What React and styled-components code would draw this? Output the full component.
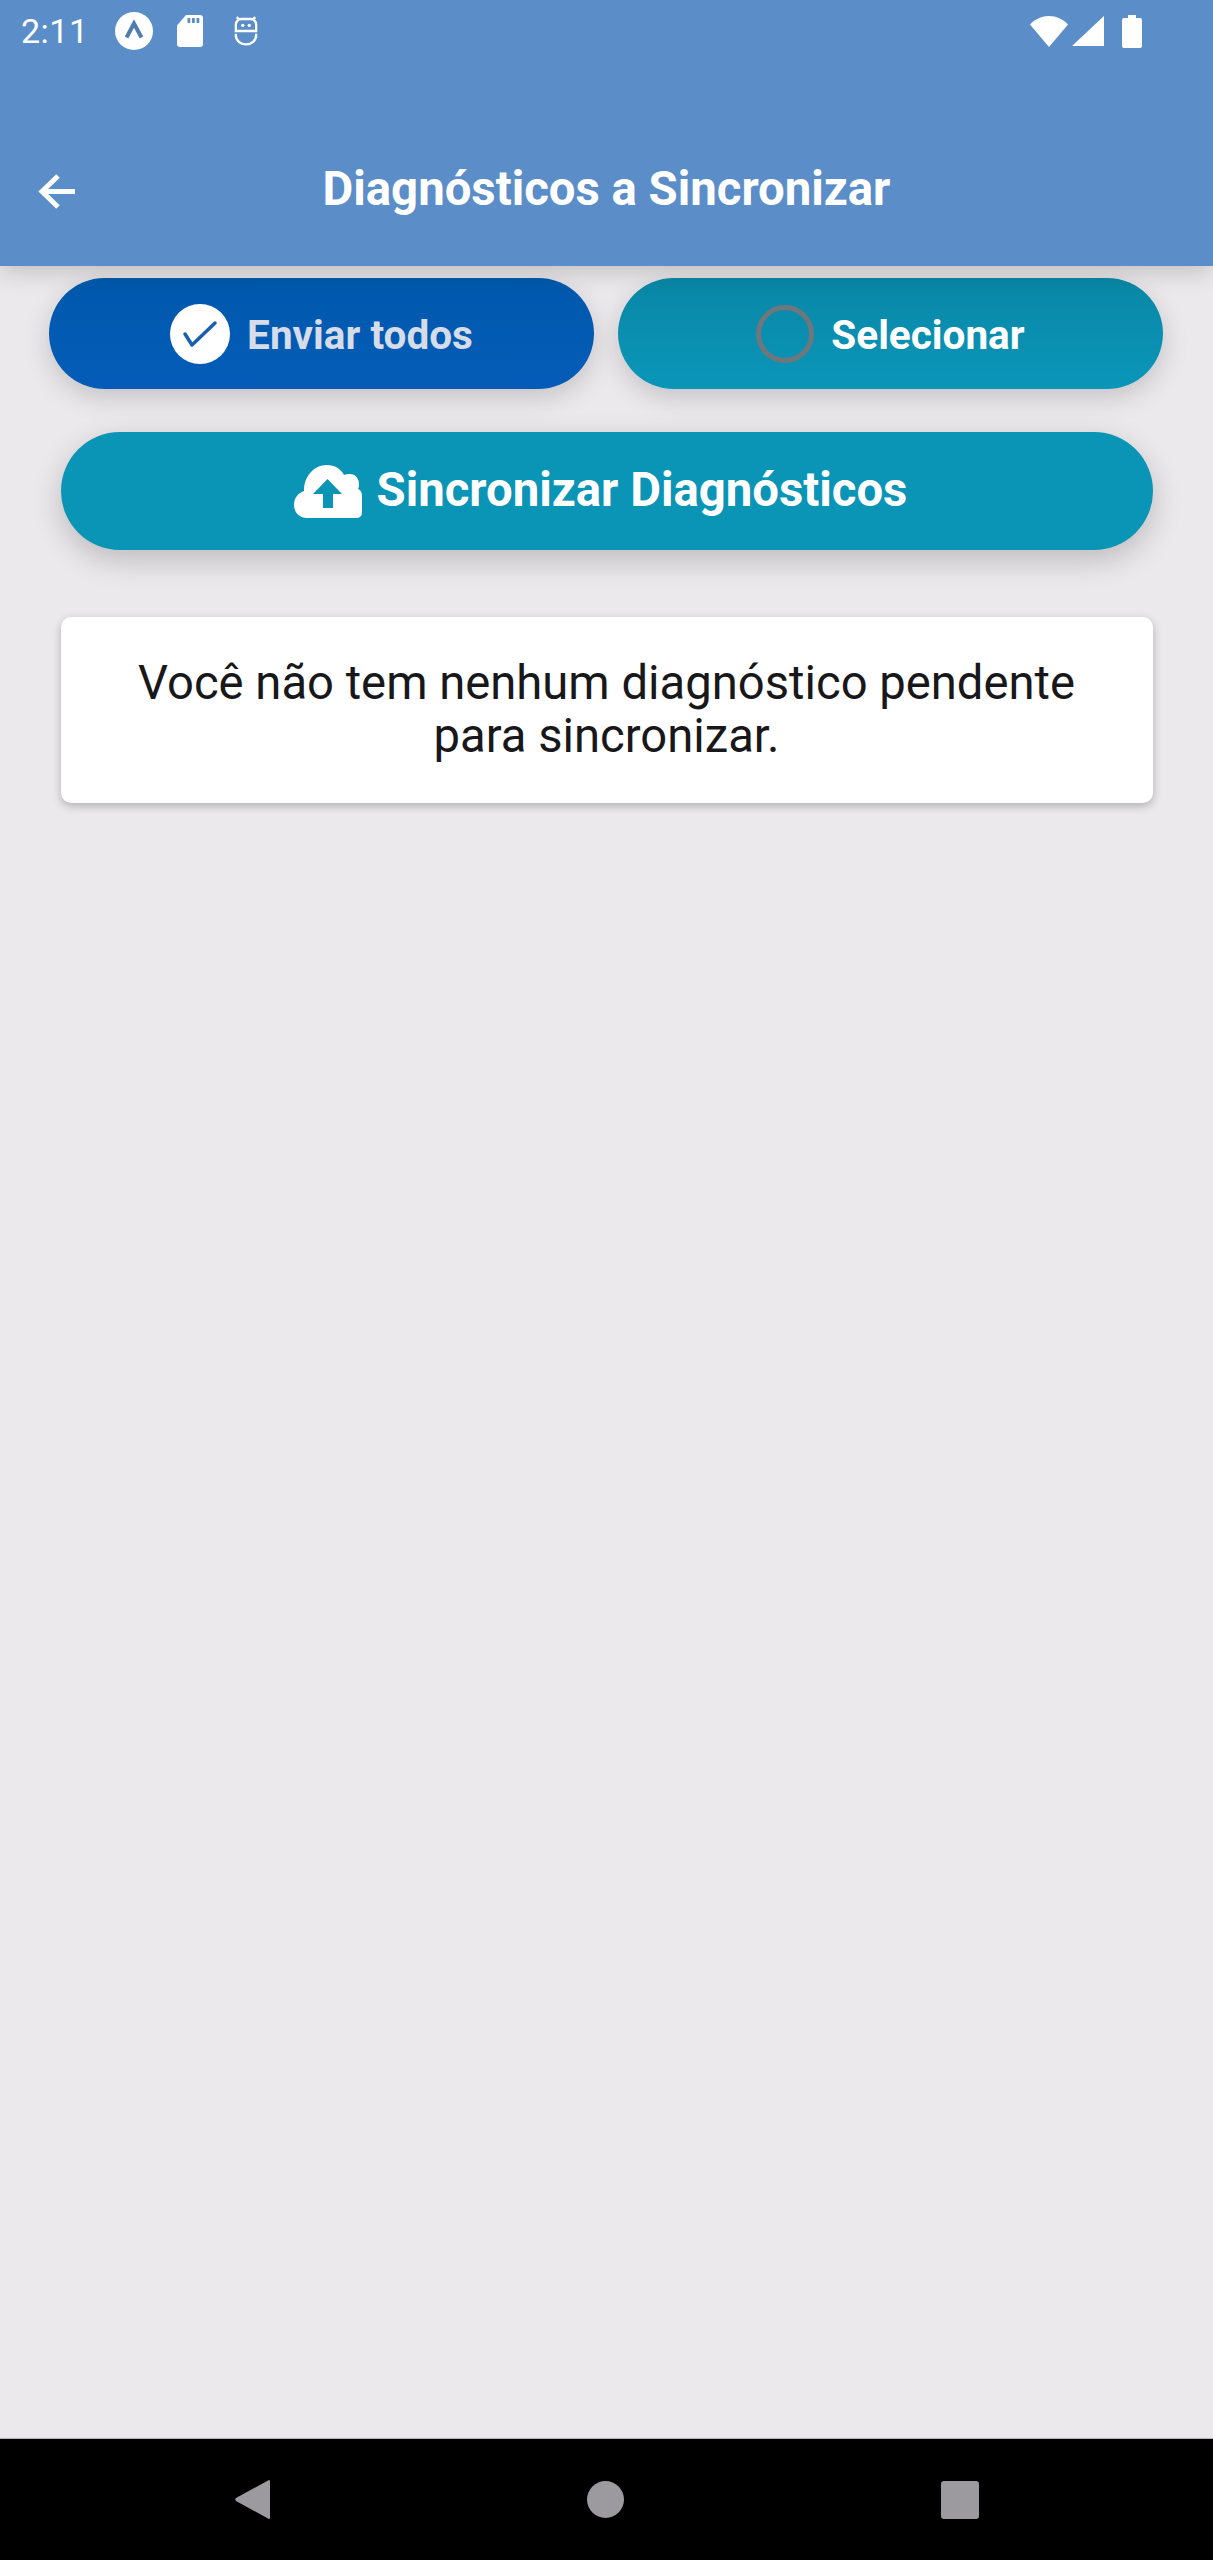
import React from "react";
import styled, { createGlobalStyle } from "styled-components";

const GlobalStyle = createGlobalStyle`
  html, body {
    margin: 0;
    padding: 0;
    background: #ebe9ec;
    font-family: "Roboto", "Liberation Sans", sans-serif;
  }
  button {
    font-family: inherit;
  }
`;

const App = () => {
  return (
    <Screen>
      <GlobalStyle />
      <Header>
        <StatusBar>
          <StatusLeft>
            <Clock>2:11</Clock>
            <ExpoIcon />
            <SdIcon />
            <RobotIcon />
          </StatusLeft>
          <StatusRight>
            <WifiIcon />
            <SignalIcon />
            <BatteryIcon />
          </StatusRight>
        </StatusBar>
        <Toolbar>
          <BackButton>
            <svg width="37" height="35" viewBox="0 0 37 35" fill="none" stroke="#fff" strokeWidth="5">
              <path d="M37 17.5H4" />
              <path d="M20 2L4 17.5 20 33" />
            </svg>
          </BackButton>
          <Title>Diagnósticos a Sincronizar</Title>
        </Toolbar>
      </Header>

      <Content>
        <FilterRow>
          <FilterButton $active>
            <CheckCircle>
              <svg width="60" height="60" viewBox="0 0 60 60" fill="none" stroke="#1a5fae" strokeWidth="3.500" strokeLinecap="round" strokeLinejoin="round">
                <path d="M15 30l7 11L45 19" />
              </svg>
            </CheckCircle>
            <FilterLabel $active>Enviar todos</FilterLabel>
          </FilterButton>
          <FilterButton>
            <EmptyCircle />
            <FilterLabel>Selecionar</FilterLabel>
          </FilterButton>
        </FilterRow>

        <SyncButton>
          <CloudIcon />
          <SyncLabel>Sincronizar Diagnósticos</SyncLabel>
        </SyncButton>

        <EmptyCard>
          Você não tem nenhum diagnóstico pendente
          <br />
          para sincronizar.
        </EmptyCard>
      </Content>

      <NavBar>
        <svg width="35" height="41" viewBox="0 0 35 41">
          <path d="M33 1.5c1 -1 2 -.5 2 1v36c0 1.500 -1 2 -2 1L1 22c-1 -1 -1 -2 0 -3z" fill="#9c9a9e" />
        </svg>
        <svg width="37" height="37" viewBox="0 0 37 37">
          <circle cx="18.500" cy="18.500" r="18.500" fill="#9c9a9e" />
        </svg>
        <svg width="38" height="38" viewBox="0 0 38 38">
          <rect width="38" height="38" rx="3" fill="#9c9a9e" />
        </svg>
      </NavBar>
    </Screen>
  );
};

export default App;

//icons
const CloudIcon = () => (
  <svg width="68" height="53" viewBox="0 0 68 53">
    <path
      fillRule="evenodd"
      fill="#fff"
      d="M13 53C5 53 0 47 0 40C0 33 4 28 10 26C10 11 20 0 33 0C41 0 47 4 50 10C52 9 54 9 56 9C61 9 65 13 65 19C65 21 65 22 64 24C67 25 68 28 68 31V47Q68 53 62 53ZM33.500 14L19 29H29V43H39V29H48Z"
    />
  </svg>
);

const ExpoIcon = () => (
  <svg width="38" height="38" viewBox="0 0 38 38">
    <circle cx="19" cy="19" r="19" fill="#fff" />
    <path d="M11.500 25.500L19 11.500l7.500 14" fill="none" stroke="#4f7db3" strokeWidth="4" />
  </svg>
);

const SdIcon = () => (
  <svg width="26" height="32" viewBox="0 0 26 32">
    <path
      fillRule="evenodd"
      d="M9 0h14a3 3 0 0 1 3 3v26a3 3 0 0 1 -3 3H3a3 3 0 0 1 -3 -3V10.500zM10.500 3v5h2.800V3zM15 3v5h2.800V3zM19.500 3v5h2.800V3z"
      fill="#fff"
    />
  </svg>
);

const RobotIcon = () => (
  <svg width="24" height="32" viewBox="0 0 26 32" fill="none" stroke="#fff" strokeWidth="2.500">
    <path d="M2 16V9a6 6 0 0 1 6 -6h10a6 6 0 0 1 6 6v7z" />
    <path d="M3 1l3 3M23 1l-3 3" />
    <path d="M2 19v2a11 9.500 0 0 0 22 0v-2" />
    <circle cx="9.500" cy="10" r="1.800" fill="#fff" stroke="none" />
    <circle cx="16.500" cy="10" r="1.800" fill="#fff" stroke="none" />
  </svg>
);

const WifiIcon = () => (
  <svg width="38" height="31" viewBox="0 0 38 31">
    <path d="M0 8.500C5 3 12 0 19 0s14 3 19 8.500L19 31z" fill="#fff" />
  </svg>
);

const SignalIcon = () => (
  <svg width="32" height="30" viewBox="0 0 32 30">
    <path d="M32 0v30H0z" fill="#fff" />
  </svg>
);

const BatteryIcon = () => (
  <svg width="20" height="33" viewBox="0 0 20 33">
    <path d="M6 0h8v3h4a2 2 0 0 1 2 2v26a2 2 0 0 1 -2 2H2a2 2 0 0 1 -2 -2V5a2 2 0 0 1 2 -2h4z" fill="#fff" />
  </svg>
);

const Screen = styled.div`
  display: flex;
  flex-direction: column;
  width: 1213px;
  height: 2560px;
  overflow: hidden;
  background: #ebe9ec;
`;

const Header = styled.header`
  position: relative;
  z-index: 2;
  flex: 0 0 266px;
  box-sizing: border-box;
  background: #5b8ec9;
  box-shadow: 0 4px 24px rgba(0, 0, 0, 0.2);
`;

const StatusBar = styled.div`
  display: flex;
  justify-content: space-between;
  align-items: center;
  height: 62px;
  padding: 0 71px 0 21px;
`;

const StatusLeft = styled.div`
  display: flex;
  align-items: center;
  gap: 24px;

  svg:last-child {
    margin-left: 7px;
  }
`;

const StatusRight = styled.div`
  display: flex;
  align-items: center;
  gap: 4px;

  svg:last-child {
    margin-left: 14px;
  }
`;

const Clock = styled.span`
  width: 70px;
  color: #fff;
  font-size: 34px;
  letter-spacing: 0.5px;
`;

const Toolbar = styled.div`
  display: grid;
  grid-template-columns: 1fr auto 1fr;
  align-items: center;
  height: 70px;
  margin-top: 92px;
`;

const BackButton = styled.div`
  display: flex;
  padding: 5px 0 0 38px;
`;

const Title = styled.h1`
  margin: 0;
  color: #fff;
  font-size: 47.3px;
  font-weight: 700;
  line-height: 70px;
  white-space: nowrap;
`;

const Content = styled.main`
  flex: 1;
  display: flex;
  flex-direction: column;
  align-items: center;
  padding-top: 12px;
`;

const FilterRow = styled.div`
  display: grid;
  grid-template-columns: 545px 545px;
  gap: 24px;
  margin-right: 1px;
`;

const FilterButton = styled.button`
  display: flex;
  align-items: center;
  justify-content: center;
  gap: 17px;
  height: 111px;
  padding: 0;
  border: none;
  border-radius: 56px;
  background: ${(props) =>
    props.$active
      ? "linear-gradient(#0059ac, #045cb8)"
      : "linear-gradient(#0a87a6, #0a96b9)"};
  box-shadow: 0 8px 26px rgba(0, 0, 0, 0.17);
`;

const FilterLabel = styled.span`
  padding-top: 2px;
  color: ${(props) => (props.$active ? "#d6dce8" : "#fff")};
  font-size: 40.5px;
  font-weight: 700;
`;

const CheckCircle = styled.span`
  display: flex;
  width: 60px;
  height: 60px;
  border-radius: 50%;
  background: #fff;
`;

const EmptyCircle = styled.span`
  box-sizing: border-box;
  width: 58px;
  height: 58px;
  border: 5px solid #6f777d;
  border-radius: 50%;
`;

const SyncButton = styled.button`
  display: flex;
  align-items: center;
  justify-content: center;
  gap: 15px;
  width: 1092px;
  height: 118px;
  margin-top: 43px;
  padding: 0 12px 0 0;
  border: none;
  border-radius: 59px;
  background: #0a94b6;
  box-shadow: 0 10px 30px rgba(0, 0, 0, 0.2);
`;

const SyncLabel = styled.span`
  padding-bottom: 2px;
  color: #fff;
  font-size: 47.3px;
  font-weight: 700;
`;

const EmptyCard = styled.div`
  box-sizing: border-box;
  width: 1092px;
  height: 186px;
  margin-top: 67px;
  padding: 40px 20px 0;
  border-radius: 10px;
  background: #fff;
  color: #18171a;
  font-size: 47.2px;
  line-height: 53px;
  text-align: center;
  box-shadow: 0 3px 8px rgba(0, 0, 0, 0.25);
`;

const NavBar = styled.nav`
  flex: 0 0 122px;
  display: flex;
  align-items: center;
  justify-content: center;
  gap: 317px;
  background: #000;
  border-top: 1px solid #b5b4b7;
  box-sizing: border-box;
`;
